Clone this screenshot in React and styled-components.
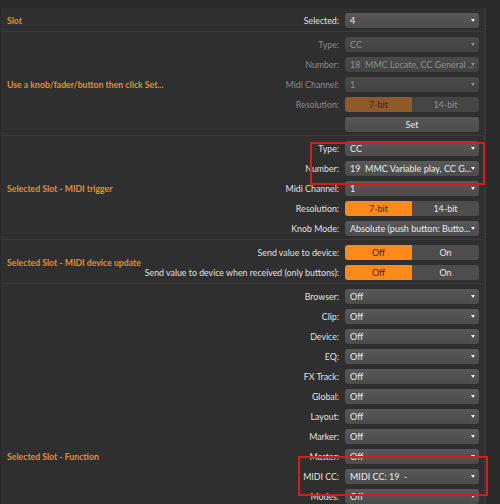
import React from 'react';
import styled, { createGlobalStyle } from 'styled-components';

const GlobalStyle = createGlobalStyle`
  html, body {
    margin: 0;
    padding: 0;
    background: #2a2a2a;
    overflow: hidden;
  }
  body {
    font-family: Lato, "Open Sans", sans-serif;
    font-size: 9px;
  }
`;

const Page = styled.div`
  position: relative;
  width: 500px;
  height: 504px;
  padding-top: 8px;
  box-sizing: border-box;
  background: #2a2a2a;
  overflow: hidden;
`;

const Panel = styled.div`
  width: 486px;
  background: #2f2f2f;
  border-right: 2px solid #383838;
  border-left: 1px solid #292929;
  box-sizing: border-box;
`;

const Section = styled.div`
  display: flex;
  align-items: stretch;
  min-height: ${p => p.minHeight || 0}px;
  padding: 5px 5px 3px 0;
  border-bottom: 1px solid #3b3b3b;
`;

const Header = styled.div`
  flex: 1;
  min-width: 0;
  align-self: center;
  padding-left: 6px;
  color: #e38f30;
  font-weight: 700;
  font-size: 8.7px;
  white-space: nowrap;
`;

const Rows = styled.div`
  display: flex;
  flex-direction: column;
  flex-shrink: 0;
  gap: 5px;
`;

const Row = styled.div`
  display: flex;
  align-items: center;
  justify-content: flex-end;
  gap: 6px;
  height: 15px;
`;

const Label = styled.span`
  color: ${p => (p.disabled ? '#8c8c8c' : '#e2e2e2')};
  white-space: nowrap;
  font-size: 8.8px;
`;

const SelectBox = styled.div`
  position: relative;
  width: 134px;
  height: 15px;
  flex-shrink: 0;
  box-sizing: border-box;
  padding: 0 14px 0 5px;
  display: flex;
  align-items: center;
  border-radius: 3px;
  background: ${p => (p.disabled ? 'linear-gradient(#4a4a4a, #434343)' : 'linear-gradient(#595959, #4b4b4b)')};
  color: ${p => (p.disabled ? '#8e8e8e' : '#ececec')};
  font-size: 9px;
`;

const Value = styled.span`
  white-space: pre;
`;

const Arrow = styled.span`
  position: absolute;
  right: 4px;
  top: 6px;
  width: 0;
  height: 0;
  border-left: 2px solid transparent;
  border-right: 2px solid transparent;
  border-top: 3px solid ${p => (p.disabled ? '#8e8e8e' : '#f0f0f0')};
`;

const Toggle = styled.div`
  display: flex;
  width: 134px;
  height: 15px;
  flex-shrink: 0;
  border-radius: 3px;
  overflow: hidden;
`;

const ToggleHalf = styled.div`
  flex: 1;
  display: flex;
  align-items: center;
  justify-content: center;
  font-size: 9px;
  background: ${p =>
    p.active ? (p.disabled ? '#8e5a2a' : '#ff8a1a') : p.disabled ? '#454545' : '#4d4d4d'};
  color: ${p =>
    p.active ? (p.disabled ? '#3a281a' : '#3d2613') : p.disabled ? '#8e8e8e' : '#e8e8e8'};
`;

const Button = styled.div`
  width: 134px;
  height: 15px;
  border-radius: 3px;
  display: flex;
  align-items: center;
  justify-content: center;
  background: linear-gradient(#575757, #4b4b4b);
  color: #ececec;
  font-size: 9px;
`;

const Highlight = styled.div`
  position: absolute;
  left: ${p => p.x}px;
  top: ${p => p.y}px;
  width: ${p => p.w}px;
  height: ${p => p.h}px;
  border: 2px solid #d51d1d;
  box-sizing: border-box;
  pointer-events: none;
`;

const Select = ({ value, disabled }) => (
  <SelectBox disabled={disabled}>
    <Value>{value}</Value>
    <Arrow disabled={disabled} />
  </SelectBox>
);

const Switch = ({ left, right, disabled }) => (
  <Toggle>
    <ToggleHalf active disabled={disabled}>{left}</ToggleHalf>
    <ToggleHalf disabled={disabled}>{right}</ToggleHalf>
  </Toggle>
);

const Field = ({ label, disabled, children }) => (
  <Row>
    <Label disabled={disabled}>{label}</Label>
    {children}
  </Row>
);

// the list runs on below the window; the section keeps its full height
const functionRows = [
  'Browser', 'Clip', 'Device', 'EQ', 'FX Track', 'Global', 'Layout', 'Marker',
  'Master', 'MIDI CC', 'Modes'
];

const App = () => (
  <Page>
    <GlobalStyle />
    <Panel>
      <Section>
        <Header>Slot</Header>
        <Rows>
          <Field label="Selected:"><Select value="4" /></Field>
        </Rows>
      </Section>

      <Section>
        <Header>Use a knob/fader/button then click Set...</Header>
        <Rows>
          <Field label="Type:" disabled><Select value="CC" disabled /></Field>
          <Field label="Number:" disabled>
            <Select value="18  MMC Locate, CC General ..." disabled />
          </Field>
          <Field label="Midi Channel:" disabled><Select value="1" disabled /></Field>
          <Field label="Resolution:" disabled><Switch left="7-bit" right="14-bit" disabled /></Field>
          <Field label=""><Button>Set</Button></Field>
        </Rows>
      </Section>

      <Section>
        <Header>Selected Slot - MIDI trigger</Header>
        <Rows>
          <Field label="Type:"><Select value="CC" /></Field>
          <Field label="Number:"><Select value="19  MMC Variable play, CC G..." /></Field>
          <Field label="Midi Channel:"><Select value="1" /></Field>
          <Field label="Resolution:"><Switch left="7-bit" right="14-bit" /></Field>
          <Field label="Knob Mode:"><Select value="Absolute (push button: Butto..." /></Field>
        </Rows>
      </Section>

      <Section>
        <Header>Selected Slot - MIDI device update</Header>
        <Rows>
          <Field label="Send value to device:"><Switch left="Off" right="On" /></Field>
          <Field label="Send value to device when received (only buttons):">
            <Switch left="Off" right="On" />
          </Field>
        </Rows>
      </Section>

      <Section minHeight={335}>
        <Header>Selected Slot - Function</Header>
        <Rows>
          {functionRows.map(name => (
            <Field key={name} label={`${name}:`}>
              <Select value={name === 'MIDI CC' ? 'MIDI CC: 19  -' : 'Off'} />
            </Field>
          ))}
        </Rows>
      </Section>
    </Panel>

    <Highlight x={310} y={142} w={175} h={43} />
    <Highlight x={298} y={456} w={190} h={40} />
  </Page>
);

export default App;
